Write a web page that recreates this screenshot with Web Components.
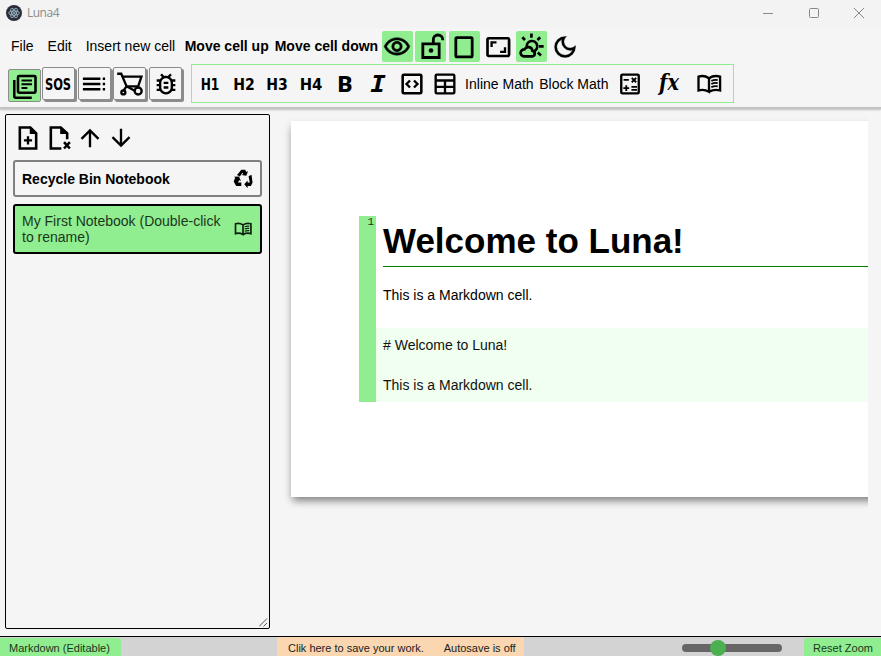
<!DOCTYPE html>
<html lang="en"><head><meta charset="utf-8"><title>Luna4</title>
<style>
html,body{margin:0;height:100%;overflow:hidden}
body{font:14px/20px "Liberation Sans",Arial,sans-serif;color:#000;background:#f5f5f5}
</style></head><body><luna-app></luna-app>
<script>
const S = (d, w = 2) => `<path d="${d}" fill="none" stroke="currentColor" stroke-width="${w}"/>`;
const F = (d, w = 0) => `<path d="${d}" stroke="currentColor" stroke-width="${w}"/>`;
const T = (s, x, y, size, extra = '') => `<text x="${x}" y="${y}" font-size="${size}" text-anchor="middle" ${extra}>${s}</text>`;
const H = (s, w) => T(s, 12, 17.2, 13.6, `font-family="DejaVu Sans" font-weight="700" textLength="${w}" lengthAdjust="spacingAndGlyphs"`);
const ICONS = {
  library: S('M6 4.5a1 1 0 0 1 1-1h13a1 1 0 0 1 1 1v12.300a1 1 0 0 1-1 1H7a1 1 0 0 1-1-1z', 2.2) + S('M2.800 6.800V21a1 1 0 0 0 1 1H17.800', 2.2) + S('M9 7.300h9M9 10.500h9M9 13.700h5', 1.7),
  sos: H('SOS', 22.5),
  toc: F('M2.500 6.500h15v2h-15zM2.500 11h15v2h-15zM2.500 15.500h15v2h-15zM19.500 6.500h2v2h-2zM19.500 11h2v2h-2zM19.500 15.500h2v2h-2z'),
  cart: S('M1 3.200H4.500l4.600 10.800H19L21.800 5.700H5.500M9 14 6 18.300') + '<circle cx="6.300" cy="19.200" r="1.700" fill="none" stroke="currentColor" stroke-width="2"/><circle cx="19" cy="18" r="3" fill="none" stroke="currentColor" stroke-width="2"/>' + S('M9 14 16 17.800'),
  bug: F('M20 8h-2.810c-.45-.78-1.070-1.450-1.820-1.960L17 4.410 15.590 3l-2.170 2.170C12.960 5.060 12.490 5 12 5s-.96.060-1.410.170L8.410 3 7 4.410l1.620 1.630C7.880 6.550 7.260 7.220 6.810 8H4v2h2.090c-.050.330-.090.660-.090 1v1H4v2h2v1c0 .340.040.670.090 1H4v2h2.810c1.040 1.790 2.970 3 5.190 3s4.150-1.210 5.190-3H20v-2h-2.090c.050-.330.090-.660.090-1v-1h2v-2h-2v-1c0-.340-.040-.670-.090-1H20V8zm-4 7c0 2.210-1.790 4-4 4s-4-1.790-4-4v-4c0-2.210 1.790-4 4-4s4 1.790 4 4v4zm-6-1h4v2h-4zm0-4h4v2h-4z'),
  eye: F('M12 6c3.790 0 7.170 2.130 8.820 5.500C19.170 14.870 15.790 17 12 17s-7.170-2.130-8.820-5.500C4.830 8.130 8.210 6 12 6m0-2C7 4 2.730 7.110 1 11.500 2.730 15.890 7 19 12 19s9.270-3.110 11-7.500C21.270 7.110 17 4 12 4zm0 5c1.380 0 2.500 1.120 2.500 2.500S13.380 14 12 14s-2.500-1.120-2.500-2.500S10.620 9 12 9m0-2c-2.480 0-4.500 2.020-4.500 4.500S9.520 16 12 16s4.500-2.020 4.500-4.500S14.480 7 12 7z', .4),
  unlock: S('M5 9.300h14v11.700H5zM14 9V5.700a4 4 0 0 1 8 0v.6', 2.4) + '<circle cx="12" cy="15" r="2"/>',
  portrait: S('M5 5a1 1 0 0 1 1-1h12a1 1 0 0 1 1 1v14.500a1 1 0 0 1-1 1H6a1 1 0 0 1-1-1z', 2.4),
  aspect: S('M3 5.500a1 1 0 0 1 1-1h16.500a1 1 0 0 1 1 1v13.200a1 1 0 0 1-1 1H4a1 1 0 0 1-1-1z', 2.3) + S('M6.500 12V8h4.200M18 12.200v4h-4.200', 2),
  weather: S('M7.500 11.500a4.500 4.500 0 1 1 6.200 4M11.500.5V4M3.700 3.700 6 6M19 3.700 16.700 6M18 11.500h4M17 16.800l2.700 2.500', 2.3) + S('M5 20a3 3 0 1 1 .5-6 3.700 3.700 0 0 1 6.900 1.300 2.400 2.400 0 0 1 .1 4.700z', 2.3),
  moon: F('M12 21q-3.750 0-6.375-2.625T3 12t2.625-6.375T12 3q.35 0 .688.025t.662.075q-1.025.725-1.637 1.888T11.100 7.500q0 2.250 1.575 3.825T16.500 12.900q1.375 0 2.525-.613T20.900 10.650q.05.325.075.662T21 12q0 3.750-2.625 6.375T12 21m0-2q2.200 0 3.950-1.213t2.550-3.162q-.5.125-1 .2t-1 .075q-3.075 0-5.237-2.163T9.100 7.500q0-.5.075-1t.2-1q-1.950.8-3.163 2.550T5 12q0 2.900 2.050 4.950T12 19', .3),
  h1: H('H1', 16), h2: H('H2', 18.5), h3: H('H3', 18.5), h4: H('H4', 19.5),
  bold: T('B', 12, 19, 19.5, 'font-family="Roboto" font-weight="900"'),
  italic: T('I', 12, 19, 19, 'font-family="DejaVu Sans Mono" font-weight="700" font-style="oblique" stroke="currentColor" stroke-width=".2" textLength="13" lengthAdjust="spacingAndGlyphs"'),
  code: S('M4 5a1 1 0 0 1 1-1h14a1 1 0 0 1 1 1v14a1 1 0 0 1-1 1H5a1 1 0 0 1-1-1z', 2.2) + S('M10.300 9 7.300 12l3 3M13.700 9l3 3-3 3'),
  table: S('M4 5a1 1 0 0 1 1-1h14a1 1 0 0 1 1 1v14a1 1 0 0 1-1 1H5a1 1 0 0 1-1-1zM4 9h16M4 14.500h16M12 9v11'),
  calc: S('M4.500 5a1 1 0 0 1 1-1h13a1 1 0 0 1 1 1v14a1 1 0 0 1-1 1h-13a1 1 0 0 1-1-1z') + S('M6.500 8.500h4.500M13.500 6.700l3.800 3.800M17.300 6.700l-3.800 3.800M6.300 15.500h5M8.800 13v5M13.200 14.500h4.800M13.200 17h4.800', 1.6),
  fx: T('fx', 12, 17.300, 19.500, 'font-family="DejaVu Serif" font-weight="700" font-style="italic" textLength="17" lengthAdjust="spacingAndGlyphs"'),
  book: S('M12 7C9 5 6 4.700 3 5.700V17.500c3-.9 6-.6 9 1.100zM12 7c3-2 6-2.300 9.500-1.300V17.500c-3.500-.9-6.500-.6-9.500 1.100', 2) + S('M14 9.300c2-.9 3.700-1.100 5.500-.7M14 12c2-.9 3.700-1.100 5.500-.7M14 14.700c2-.9 3.700-1.100 5.500-.7', 1.5),
  add: S('M5 3h9l5 5v13H5z', 2.200) + F('M13.500 2v6.500H20z') + S('M12 10.500v7M8.500 14h7'),
  remove: S('M14 21H5V3h8.500l5.500 5v5', 2.200) + F('M13 2v6.500h7z') + S('m16.300 15.500 5 5.500M21.300 15.500l-5 5.500', 2.2),
  up: F('M11 20V7.825l-5.600 5.600L4 12l8-8 8 8-1.400 1.425-5.600-5.600V20z'),
  down: F('M11 4v12.175l-5.600-5.600L4 12l8 8 8-8-1.400-1.425-5.600 5.600V4z'),
  recycle: F('M8.300 3 9.800.8h4.700l1.700 2.800 1.900-1.100-2.100 5.600-5.700-.8 1.900-1.200-.9-1.500L8.300 9 4.800 7.200zM18.700 8.800l3.500-2 1.300 9.400-2 4.300h-4V23l-4-4.800 4-4.500v2.500h2.600zM1.300 9.300l5.900-.4 2.300 5.600-2.200-1-1.300 2.600h4V20.500H3.800L.8 15l1.800-4.600z')
};
const define = (name, css, html) => customElements.define(name, class extends HTMLElement {
  constructor() {
    super();
    this.attachShadow({mode: 'open'}).innerHTML = `<style>*{box-sizing:border-box}:host{box-sizing:border-box}${css}</style>${typeof html === 'function' ? html(this) : html}`;
  }
});
define('luna-icon', ':host{display:block;width:var(--size,28px);height:var(--size,28px);flex:none}svg{display:block;overflow:visible;width:100%;height:100%;fill:currentColor}',
  el => `<svg viewBox="0 0 24 24">${ICONS[el.getAttribute('name')]}</svg>`);
define('window-bar', `:host{display:flex;align-items:center;height:28px;flex:none;background:#f3f3f3;color:#8c8c8c;font:12px/16px "Open Sans",sans-serif;padding:0 16px 3px 6px}
  span{margin-left:5px;padding-top:1px;flex:1;letter-spacing:-.5px}.ctl{display:block;margin-left:33.500px}`,
  `<svg width="16" height="16" viewBox="0 0 16 16"><circle cx="8" cy="8" r="8" fill="#2b2e3a"/><g fill="none" stroke="#9fc4cf" stroke-width=".8"><ellipse cx="8" cy="8" rx="5.300" ry="2.100"/><ellipse cx="8" cy="8" rx="5.300" ry="2.100" transform="rotate(60 8 8)"/><ellipse cx="8" cy="8" rx="5.300" ry="2.100" transform="rotate(120 8 8)"/></g><circle cx="8" cy="8" r=".9" fill="#9fc4cf"/></svg>
  <span>Luna4</span><svg class="ctl" width="12" height="12"><path d="M1 6.500h10" stroke="#888"/></svg><svg class="ctl" width="12" height="12"><rect x="1.500" y="1.500" width="9" height="9" rx="1" fill="none" stroke="#888"/></svg><svg class="ctl" width="12" height="12"><path d="m1 1 10 10M11 1 1 11" stroke="#888"/></svg>`);
define('toggle-icon', ':host{display:flex;width:31px;height:31px;align-items:center;justify-content:center;border-radius:2px}:host([on]){background:#90ee90}', el => `<luna-icon name="${el.getAttribute('name')}"></luna-icon>`);
define('menu-bar', `:host{display:flex;align-items:center;height:31px;margin-top:3px;padding-left:11px;white-space:nowrap}
  span,b{padding-bottom:2px}span{margin-right:14px}b{margin-right:6px}.tight{margin-right:9.500px}.last{margin-right:3.700px}.toggles{display:flex;gap:2.550px}`,
  `<span>File</span><span>Edit</span><span class="tight">Insert new cell</span><b>Move cell up</b><b class="last">Move cell down</b>
  <div class="toggles"><toggle-icon name="eye" on></toggle-icon><toggle-icon name="unlock" on></toggle-icon><toggle-icon name="portrait" on></toggle-icon><toggle-icon name="aspect"></toggle-icon><toggle-icon name="weather" on></toggle-icon><toggle-icon name="moon"></toggle-icon></div>`);
define('panel-button', ':host{display:flex;width:33px;height:33px;align-items:center;justify-content:center;border:1px solid #8c8c8c;border-radius:2px;box-shadow:2px 2px #8c8c8c;background:#f5f5f5}:host([on]){background:#90ee90;box-shadow:none;transform:translate(2px,2px)}', el => `<luna-icon name="${el.getAttribute('name')}"></luna-icon>`);
define('tool-bar', `:host{display:flex;align-items:center;height:39px;margin-top:2px;padding-left:6px}.panels{display:flex;gap:2.800px;height:33px;align-self:flex-start;margin-top:3px}
  .tools{display:flex;align-items:center;gap:5.650px;width:543px;height:39px;border:1px solid #90ee90;margin-left:8.800px;padding-left:4px;white-space:nowrap}.wide{margin-left:2px;margin-right:5.500px}`,
  `<div class="panels"><panel-button name="library" on></panel-button><panel-button name="sos"></panel-button><panel-button name="toc"></panel-button><panel-button name="cart"></panel-button><panel-button name="bug"></panel-button></div>
  <div class="tools">${['h1','h2','h3','h4','bold','italic','code','table'].map(n => `<luna-icon name="${n}"></luna-icon>`).join('')}<span>Inline Math</span><span>Block Math</span><luna-icon class="wide" name="calc"></luna-icon><luna-icon name="fx"></luna-icon><luna-icon class="wide" style="margin-left:6px" name="book"></luna-icon></div>`);
define('notebook-item', `:host{display:flex;align-items:center;justify-content:space-between;border:2px solid gray;border-radius:3px;padding:0 7px;line-height:16px;height:37px;--size:20px}
  :host([bin]){font-weight:700}:host([active]){background:#90ee90;border-color:#000;color:#1c361c;height:50px;margin-top:7px}:host([active]) luna-icon{color:#0c200c}div{width:208px}`,
  el => `<div><slot></slot></div><luna-icon name="${el.getAttribute('icon')}"></luna-icon>`);
define('notebook-panel', `:host{display:block;position:relative;width:265px;height:515px;flex:none;border:1px solid #000;border-radius:2px;padding:9px 7px}
  nav{display:flex;gap:3px;margin-bottom:8px;padding-left:1px}.grip{position:absolute;right:1px;bottom:1px}`,
  `<nav><luna-icon name="add"></luna-icon><luna-icon name="remove"></luna-icon><luna-icon name="up"></luna-icon><luna-icon name="down"></luna-icon></nav><slot></slot><svg class="grip" width="9" height="9"><path d="M0 8.500 8 .5M4.500 8.500 8 5" stroke="#555" fill="none"/></svg>`);
define('luna-cell', `:host{display:grid;grid-template-columns:17px 1fr;height:186px}.gutter{background:#90ee90;color:#1c361c;font:11px/13px "Liberation Mono",monospace;text-align:right;padding-right:2px}
  .body{display:flex;flex-direction:column}.view{height:112px;padding-left:7px}h1{font-size:35px;line-height:40px;margin:0 0 18px;padding-top:5px;height:51px;border-bottom:1px solid green}p{margin:0}
  .source{flex:1;background:#f0fff0;padding:7px;white-space:pre-line;color:#111}`,
  `<div class="gutter">1</div><div class="body"><div class="view"><h1>Welcome to Luna!</h1><p>This is a Markdown cell.</p></div><div class="source"># Welcome to Luna!

This is a Markdown cell.</div></div>`);
define('luna-page', ':host{display:block;flex:1;overflow:hidden;padding:7px 0 0 21px}.sheet{background:#fff;height:376px;margin-right:-20px;padding:95px 20px 0 68px;box-shadow:0 4px 8px rgba(0,0,0,.2),0 6px 8px -3px rgba(0,0,0,.36)}', '<div class="sheet"><slot></slot></div>');
define('status-bar', `:host{display:grid;grid-template-columns:121px 156px 247px 158px 100px 22px 77px;height:20px;flex:none;border-top:1px solid #000;background:#d3d3d3;font-size:11px;line-height:22px;color:#222;white-space:nowrap;overflow:hidden}
  .g{background:#90ee90;padding-left:9px;border-radius:0 3px 0 0;margin-top:1px;line-height:21px;color:#1c361c}.g.r{border-radius:3px 0 0 0;grid-column:7}.o{background:#fad6b1;grid-column:3;display:flex;gap:20px;padding-left:11px}
  .track{grid-column:5;height:8px;margin-top:7px;border-radius:4px;background:#666;display:flex;align-items:center;padding-left:28px}.thumb{width:16px;height:16px;border-radius:50%;background:#4caf50}`,
  `<div class="g">Markdown (Editable)</div><div class="o"><span>Clik here to save your work.</span><span>Autosave is off</span></div><div class="track"><div class="thumb"></div></div><div class="g r">Reset Zoom</div>`);
define('luna-app', `:host{display:flex;flex-direction:column;width:881px;height:656px;background:#f5f5f5}header{height:79px;flex:none;display:flow-root}hr{height:2px;flex:none;margin:0;border:0;background:#c4c4c4;box-shadow:0 1px 2px #bbb}
  main{flex:1;display:flex;padding:5px 13px 0 5px}`,
  `<window-bar></window-bar><header><menu-bar></menu-bar><tool-bar></tool-bar></header><hr><main><notebook-panel><notebook-item icon="recycle" bin>Recycle Bin Notebook</notebook-item><notebook-item icon="book" active>My First Notebook (Double-click to rename)</notebook-item></notebook-panel><luna-page><luna-cell></luna-cell></luna-page></main><status-bar></status-bar>`);
</script></body></html>
